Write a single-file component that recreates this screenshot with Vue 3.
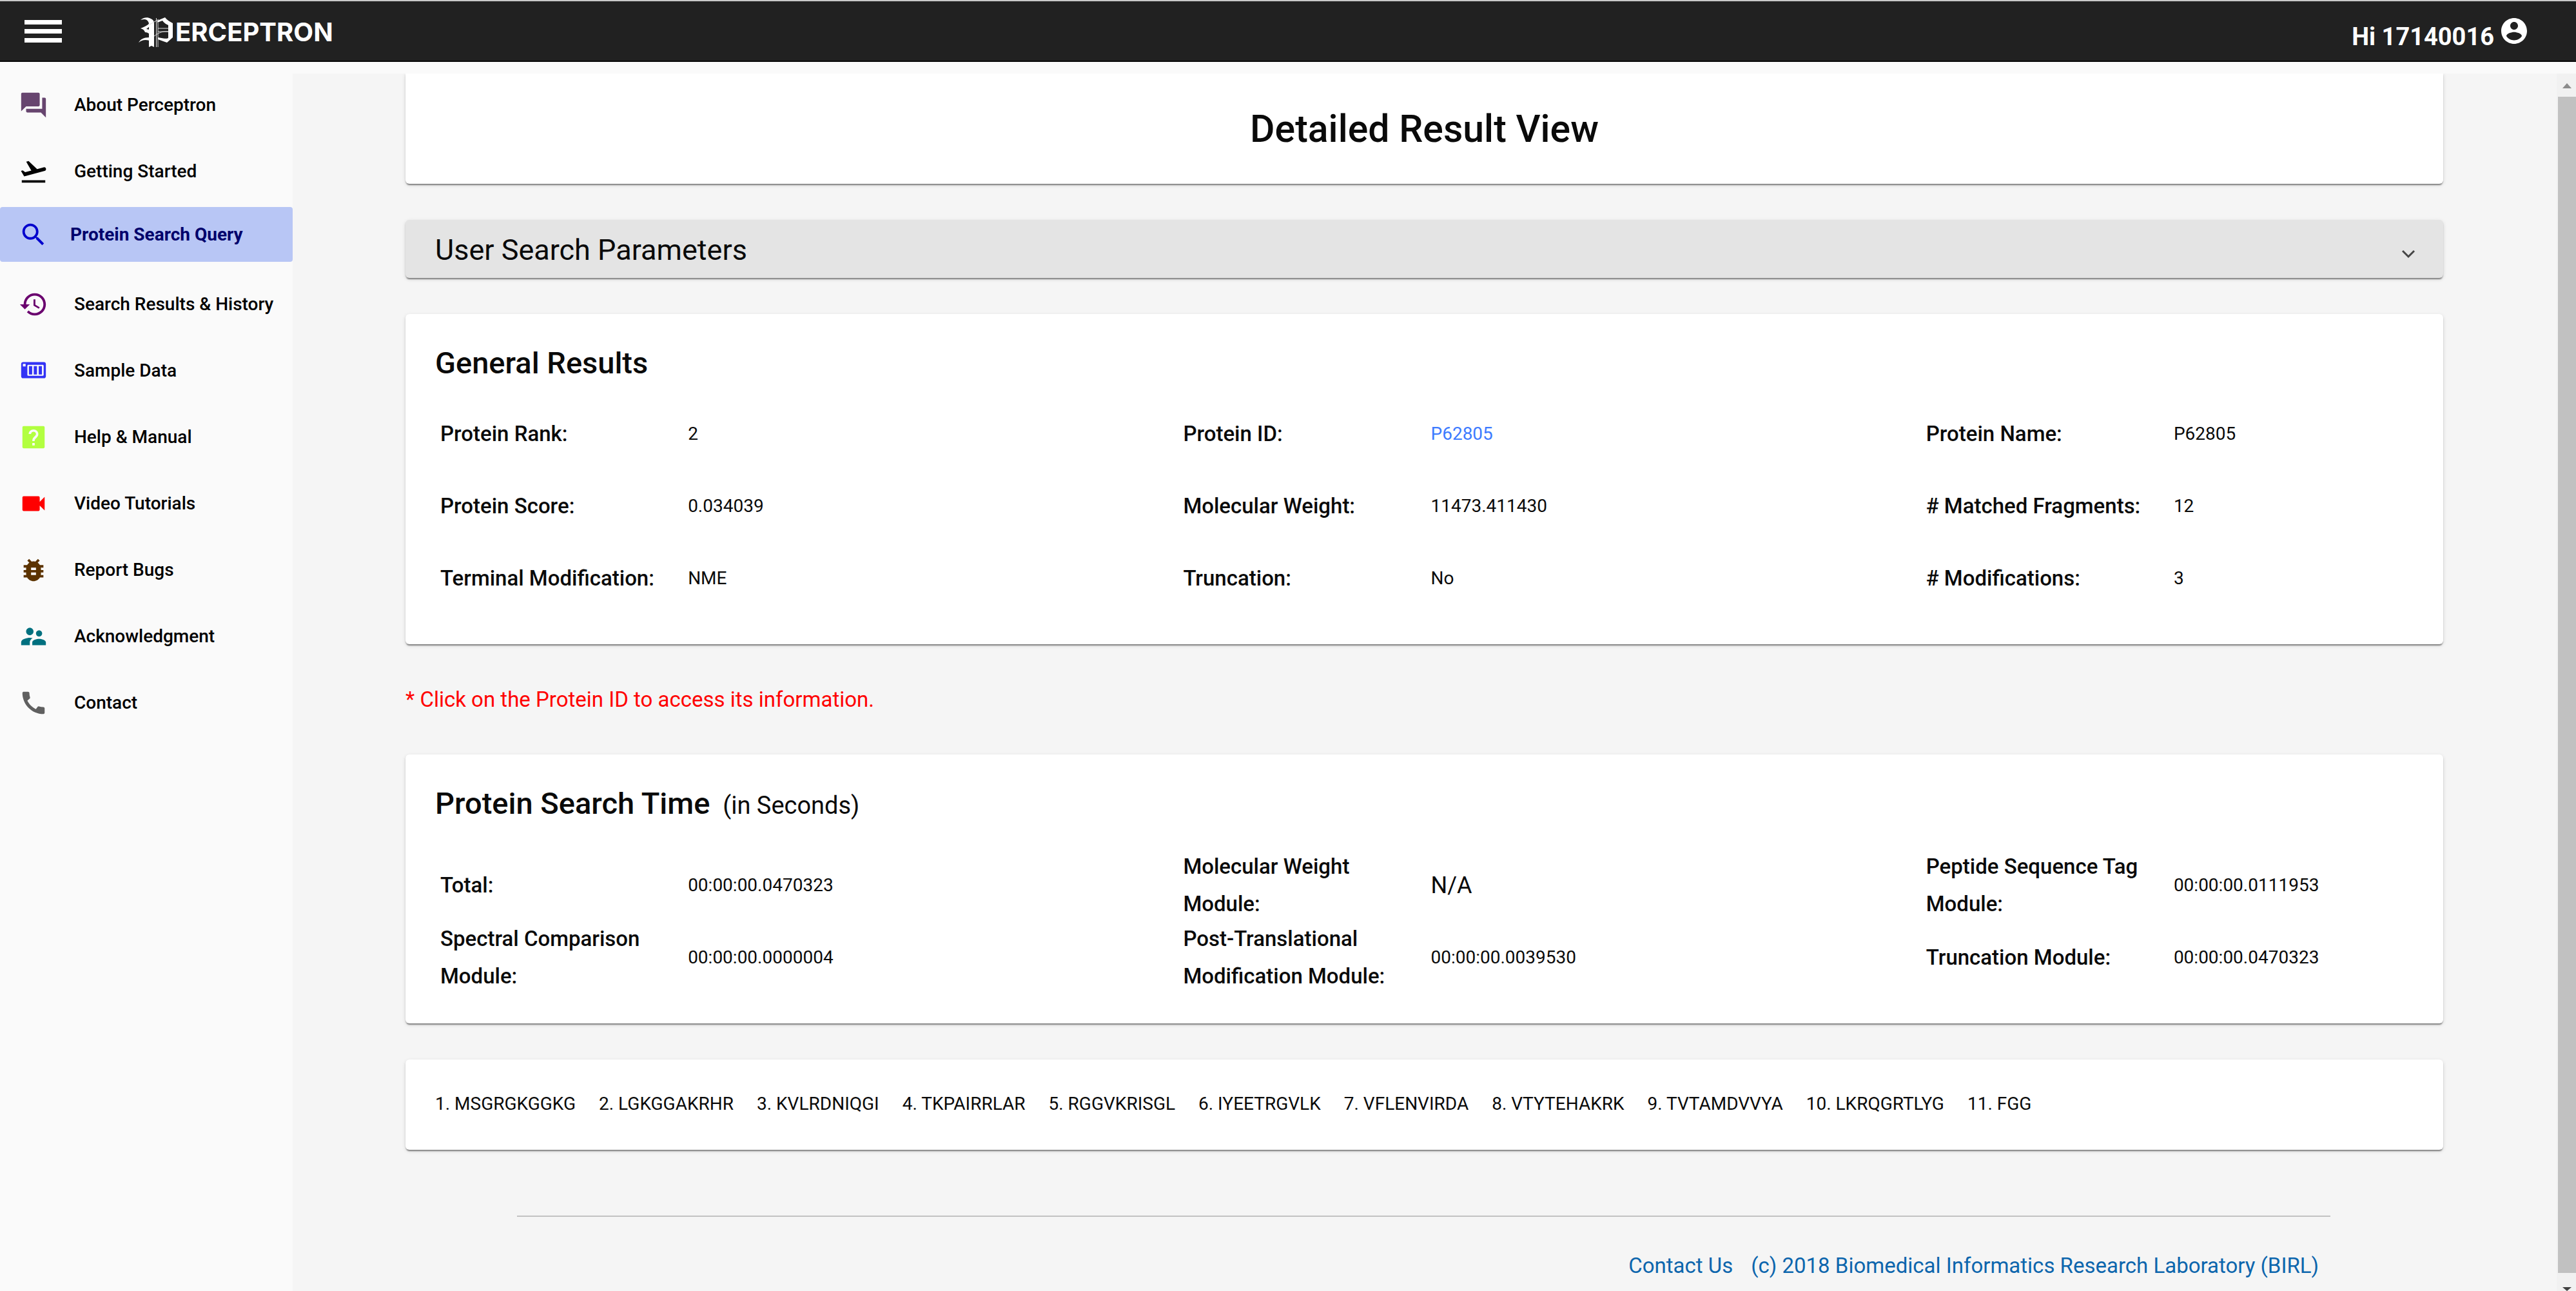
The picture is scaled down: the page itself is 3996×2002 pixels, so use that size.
<script setup>
import { ref } from 'vue'

const menu = [
  { label: 'About Perceptron', color: '#67456f', paths: ['M21 6h-2v9H6v2c0 .55.45 1 1 1h11l4 4V7c0-.55-.45-1-1-1zm-4 6V3c0-.55-.45-1-1-1H3c-.55 0-1 .45-1 1v14l4-4h10c.55 0 1-.45 1-1z'] },
  { label: 'Getting Started', color: '#000000', paths: ['M2.5 19h19v2h-19zm19.57-9.36c-.21-.8-1.04-1.28-1.84-1.06L14.92 10l-6.9-6.43-1.93.51 4.14 7.17-4.97 1.33-1.97-1.54-1.45.39 1.82 3.16.77 1.33 1.6-.43 5.31-1.42 4.35-1.16L21 11.49c.81-.23 1.28-1.05 1.07-1.85z'] },
  { label: 'Protein Search Query', color: '#0000cd', active: true, paths: ['M15.5 14h-.79l-.28-.27C15.41 12.59 16 11.11 16 9.5 16 5.91 13.09 3 9.5 3S3 5.91 3 9.5 5.91 16 9.5 16c1.61 0 3.09-.59 4.23-1.57l.27.28v.79l5 4.99L20.49 19l-4.99-5zm-6 0C7.01 14 5 11.99 5 9.5S7.01 5 9.5 5 14 7.01 14 9.5 11.99 14 9.5 14z'] },
  { label: 'Search Results & History', color: '#6a006e', paths: ['M13 3c-4.97 0-9 4.03-9 9H1l3.89 3.89.07.14L9 12H6c0-3.87 3.13-7 7-7s7 3.13 7 7-3.13 7-7 7c-1.93 0-3.68-.79-4.94-2.06l-1.42 1.42C8.27 19.99 10.51 21 13 21c4.97 0 9-4.03 9-9s-4.03-9-9-9zm-1 5v5l4.28 2.54.72-1.21-3.5-2.08V8H12z'] },
  { label: 'Sample Data', color: '#3333f5', paths: ['M3.5 5h17c.83 0 1.5.67 1.5 1.5v10c0 .83-.67 1.5-1.5 1.5h-17c-.83 0-1.5-.67-1.5-1.5v-10C2 5.67 2.67 5 3.5 5zM3.4 6.4v2.1h2.2V6.4zM7.8 7.2c-.5 0-.8.3-.8.8v7.2c0 .5.3.8.8.8h11.6c.5 0 .8-.3.8-.8V8c0-.5-.3-.8-.8-.8z', 'M8.3 8.2h2.6v6.8H8.3zM12.2 8.2h2.6v6.8h-2.6zM16.2 8.2h2.6v6.8h-2.6z'] },
  { label: 'Help & Manual', color: '#b2ff40', paths: ['M4 3h16c.55 0 1 .45 1 1v16c0 .55-.45 1-1 1H4c-.55 0-1-.45-1-1V4c0-.55.45-1 1-1zM11 16.7v2h2v-2zM12 5.8c-2.2 0-3.9 1.6-3.9 3.6h1.9c0-1.1.9-1.9 2-1.9s2 .8 2 1.9c0 1.9-3 2.1-3 5.7h1.9c0-2.4 3-2.7 3-5.7 0-2-1.7-3.6-3.9-3.6z'] },
  { label: 'Video Tutorials', color: '#ff0000', paths: ['M17 10.5V7c0-.55-.45-1-1-1H4c-.55 0-1 .45-1 1v10c0 .55.45 1 1 1h12c.55 0 1-.45 1-1v-3.5l4 4v-11l-4 4z'] },
  { label: 'Report Bugs', color: '#5c3300', paths: ['M20 8h-2.81c-.45-.78-1.07-1.45-1.82-1.96L17 4.41 15.59 3l-2.17 2.17C12.96 5.06 12.49 5 12 5c-.49 0-.96.06-1.41.17L8.41 3 7 4.41l1.62 1.63C7.88 6.55 7.26 7.22 6.81 8H4v2h2.09c-.05.33-.09.66-.09 1v1H4v2h2v1c0 .34.04.67.09 1H4v2h2.81c1.04 1.79 2.97 3 5.19 3s4.15-1.21 5.19-3H20v-2h-2.09c.05-.33.09-.66.09-1v-1h2v-2h-2v-1c0-.34-.04-.67-.09-1H20V8zm-6 8h-4v-2h4v2zm0-4h-4v-2h4v2z'] },
  { label: 'Acknowledgment', color: '#00707f', paths: ['M16.5 12c1.38 0 2.49-1.12 2.49-2.5S17.88 7 16.5 7C15.12 7 14 8.12 14 9.5s1.12 2.5 2.5 2.5zM9 11c1.66 0 2.99-1.34 2.99-3S10.66 5 9 5C7.34 5 6 6.34 6 8s1.34 3 3 3zm7.5 3c-1.83 0-5.5.92-5.5 2.75V19h11v-2.25c0-1.83-3.67-2.75-5.5-2.75zM9 13c-2.33 0-7 1.17-7 3.5V19h7v-2.25c0-.85.33-2.34 2.37-3.47C10.5 13.1 9.66 13 9 13z'] },
  { label: 'Contact', color: '#606060', paths: ['M20.01 15.38c-1.23 0-2.42-.2-3.53-.56-.35-.12-.74-.03-1.01.24l-1.57 1.97c-2.83-1.35-5.48-3.9-6.89-6.83l1.95-1.66c.27-.28.35-.67.24-1.02-.37-1.11-.56-2.3-.56-3.53 0-.54-.45-.99-.99-.99H4.19C3.65 3 3 3.24 3 3.99 3 13.28 10.73 21 20.01 21c.71 0 .99-.63.99-1.18v-3.45c0-.54-.45-.99-.99-.99z'] }
]

const general = [
  { label: 'Protein Rank:', value: '2' },
  { label: 'Protein ID:', value: 'P62805', link: true },
  { label: 'Protein Name:', value: 'P62805' },
  { label: 'Protein Score:', value: '0.034039' },
  { label: 'Molecular Weight:', value: '11473.411430' },
  { label: '# Matched Fragments:', value: '12' },
  { label: 'Terminal Modification:', value: 'NME' },
  { label: 'Truncation:', value: 'No' },
  { label: '# Modifications:', value: '3' }
]

const times = [
  { label: 'Total:', value: '00:00:00.0470323' },
  { label: 'Molecular Weight Module:', value: 'N/A', large: true },
  { label: 'Peptide Sequence Tag Module:', value: '00:00:00.0111953' },
  { label: 'Spectral Comparison Module:', value: '00:00:00.0000004' },
  { label: 'Post-Translational Modification Module:', value: '00:00:00.0039530' },
  { label: 'Truncation Module:', value: '00:00:00.0470323' }
]

const sequence = ['MSGRGKGGKG', 'LGKGGAKRHR', 'KVLRDNIQGI', 'TKPAIRRLAR', 'RGGVKRISGL', 'IYEETRGVLK', 'VFLENVIRDA', 'VTYTEHAKRK', 'TVTAMDVVYA', 'LKRQGRTLYG', 'FGG']

const menuOpen = ref(true)
</script>

<template>
  <div class="app">
    <header class="topbar">
      <button class="burger" type="button" aria-label="Toggle menu" @click="menuOpen = !menuOpen">
        <span></span><span></span><span></span>
      </button>
      <a class="brand" href="#" aria-label="Perceptron">
        <svg class="mark" viewBox="0 0 56 48" aria-hidden="true">
          <path fill="#fff" d="M4 5C8 1 15 0 20 3c4 2 5 4 5 8v36l-4-2-4 2V12c0-4-2-7-6-8-2 0-5 0-7 1z" />
          <path fill="#fff" d="M18 10C14 14 9 16 4 18c4 1 6 3 7 6 3 0 5 1 7 3V20l-5-1 5-4zM1 40c3-5 7-8 17-8v5c-7-2-12-1-17 3z" />
          <path fill="#fff" d="M30 6 42 1c3 4 7 6 12 9v22l-9 8-14-5v-3c6 1 12 3 16 1V13c-4-2-7-4-9-7l-8 3z" />
          <path fill="none" stroke="#ddd" stroke-width="1" d="M28.5 2v45M31 9v38M18 12l14-8M31 18h16M31 23h16M25 30c7-5 13-8 22-7" />
        </svg>
        <span class="wordmark">ERCEPTRON</span>
      </a>
      <a class="account" href="#">
        <span>Hi 17140016</span>
        <svg viewBox="0 0 24 24" aria-hidden="true"><path fill="#fff" d="M12 2C6.48 2 2 6.48 2 12s4.48 10 10 10 10-4.48 10-10S17.52 2 12 2zm0 3c1.66 0 3 1.34 3 3s-1.34 3-3 3-3-1.34-3-3 1.34-3 3-3zm0 14.2c-2.5 0-4.71-1.28-6-3.22.03-1.99 4-3.08 6-3.08 1.99 0 5.97 1.09 6 3.08-1.29 1.94-3.5 3.22-6 3.22z" /></svg>
      </a>
    </header>

    <div class="body">
      <nav v-show="menuOpen" class="sidebar">
        <a v-for="item in menu" :key="item.label" href="#" class="item" :class="{ active: item.active }">
          <svg viewBox="0 0 24 24" aria-hidden="true">
            <path v-for="(d, i) in item.paths" :key="i" :d="d" :fill="item.color" fill-rule="evenodd" />
          </svg>
          <span>{{ item.label }}</span>
        </a>
      </nav>

      <main class="content">
        <section class="card title-card">
          <h1>Detailed Result View</h1>
        </section>

        <button class="card panel" type="button" aria-expanded="false">
          <span>User Search Parameters</span>
          <svg viewBox="0 0 20 28" aria-hidden="true"><path d="M1 16l9 9 9-9" fill="none" stroke="#444" stroke-width="3" /></svg>
        </button>

        <section class="card">
          <h2>General Results</h2>
          <dl class="facts">
            <template v-for="f in general" :key="f.label">
              <dt>{{ f.label }}</dt>
              <dd><a v-if="f.link" href="#">{{ f.value }}</a><template v-else>{{ f.value }}</template></dd>
            </template>
          </dl>
        </section>

        <p class="note">* Click on the Protein ID to access its information.</p>

        <section class="card times">
          <h2>Protein Search Time <small>(in Seconds)</small></h2>
          <dl class="facts">
            <template v-for="f in times" :key="f.label">
              <dt>{{ f.label }}</dt>
              <dd :class="{ large: f.large }">{{ f.value }}</dd>
            </template>
          </dl>
        </section>

        <section class="card sequence">
          <span v-for="(s, i) in sequence" :key="s">{{ i + 1 }}. {{ s }}</span>
        </section>

        <footer class="footer">
          <a href="#">Contact Us</a>
          <a href="#">(c) 2018 Biomedical Informatics Research Laboratory (BIRL)</a>
        </footer>
      </main>

      <div class="scrollbar" aria-hidden="true">
        <div class="arrow up"></div>
        <div class="thumb"></div>
        <div class="arrow down"></div>
      </div>
    </div>
  </div>
</template>

<style>
body {
  margin: 0;
  background: #fafafa;
}
</style>

<style scoped>
.app {
  display: flex;
  flex-direction: column;
  min-height: 100vh;
  font-family: Roboto, "Liberation Sans", sans-serif;
  color: #0a0a0a;
}

.app * {
  box-sizing: border-box;
}

.app a {
  text-decoration: none;
}

.topbar {
  display: flex;
  align-items: center;
  height: 96px;
  padding: 0 72px 0 38px;
  background: #212121;
  border-top: 2px solid #c8c8c8;
  border-bottom: 2px solid #0a0a0a;
}

.burger {
  display: flex;
  flex-direction: column;
  gap: 7px;
  width: 58px;
  padding: 0;
  border: 0;
  background: none;
}

.burger span {
  height: 7px;
  background: #fff;
}

.brand {
  display: flex;
  align-items: center;
  gap: 2px;
  margin-left: 118px;
  padding-top: 4px;
  color: #fff;
}

.mark {
  width: 56px;
  height: 48px;
}

.wordmark {
  font-family: Inter, "Open Sans", sans-serif;
  font-size: 40px;
  font-weight: 700;
  line-height: 48px;
}

.account {
  display: flex;
  align-items: center;
  gap: 7px;
  margin-left: auto;
  color: #fff;
  font-size: 38px;
  font-weight: 700;
}

.account span {
  padding-top: 18px;
}

.account svg {
  width: 48px;
  height: 48px;
}

.body {
  display: flex;
  flex: 1;
}

.sidebar {
  flex: none;
  width: 454px;
  padding-top: 15px;
}

.item {
  display: flex;
  align-items: center;
  gap: 40px;
  height: 103px;
  padding-left: 29px;
  color: #000;
  font-size: 28px;
  font-weight: 500;
  white-space: nowrap;
}

.item svg {
  flex: none;
  width: 46px;
  height: 46px;
}

.item.active {
  gap: 34px;
  height: 85px;
  margin: 4px 0 14px;
  border-radius: 4px;
  background: #b8c6f5;
  color: #00006b;
  font-weight: 700;
}

.content {
  flex: 1;
  min-width: 0;
  margin-top: 18px;
  padding: 0 176px 0 175px;
  background: #f5f5f5;
}

.card {
  margin-bottom: 56px;
  padding: 44px 34px 46px 46px;
  border-radius: 6px;
  background: #fff;
  box-shadow: 0 4px 2px -2px rgba(0, 0, 0, 0.28), 0 2px 2px rgba(0, 0, 0, 0.2), 0 2px 6px rgba(0, 0, 0, 0.12);
}

.title-card {
  display: flex;
  align-items: center;
  justify-content: center;
  height: 171px;
  padding: 0;
  border-radius: 0 0 6px 6px;
  clip-path: inset(0 -10px -10px);
}

h1 {
  margin: 0;
  font-size: 59px;
  font-weight: 500;
}

.panel {
  display: flex;
  align-items: center;
  justify-content: space-between;
  width: 100%;
  height: 90px;
  padding: 2px 44px 0 46px;
  border: 0;
  background: #e4e4e4;
  color: inherit;
  font-family: inherit;
  font-size: 45px;
}

.panel svg {
  width: 20px;
  height: 28px;
}

h2 {
  margin: 0 0 22px;
  font-size: 47px;
  font-weight: 500;
  line-height: 64px;
}

h2 small {
  margin-left: 8px;
  font-size: 38px;
  font-weight: 400;
}

.times h2 {
  margin-bottom: 36px;
}

.facts {
  display: grid;
  grid-template-columns: 1fr 2fr 1fr 2fr 1fr 1fr;
  grid-auto-rows: 112px;
  align-items: center;
  margin: 0;
  padding-left: 8px;
}

dt {
  padding-right: 40px;
  font-size: 33px;
  font-weight: 500;
  line-height: 58px;
}

dd {
  margin: 0;
  font-size: 28px;
  line-height: 58px;
}

dd a {
  color: #3d7bff;
}

dd.large {
  font-size: 36px;
}

.note {
  margin: 0 0 56px;
  color: #ff0000;
  font-size: 33px;
  line-height: 59px;
}

.sequence {
  display: flex;
  flex-wrap: wrap;
  gap: 0 36px;
  margin-bottom: 102px;
  font-size: 28px;
  line-height: 50px;
}

.footer {
  display: flex;
  justify-content: flex-end;
  gap: 28px;
  margin: 0 175px 0 173px;
  padding: 54px 18px 14px;
  border-top: 2px solid #c2c2c2;
  font-size: 33px;
  line-height: 44px;
}

.footer a {
  color: #0d66ad;
}

.scrollbar {
  display: flex;
  flex: none;
  flex-direction: column;
  align-items: flex-end;
  width: 30px;
  margin-top: 18px;
  background: #f1f1f1;
}

.arrow {
  position: relative;
  width: 28px;
  height: 36px;
}

.arrow.down {
  height: 28px;
}

.arrow::after {
  position: absolute;
  left: 7px;
  border: 7px solid transparent;
  content: "";
}

.arrow.up::after {
  bottom: 13px;
  border-top: 0;
  border-bottom: 8px solid #8c8c8c;
}

.arrow.down::after {
  bottom: 0;
  border-top: 6px solid #404040;
  border-bottom: 0;
}

.thumb {
  flex: 1;
  width: 28px;
  background: #c1c1c1;
}
</style>
